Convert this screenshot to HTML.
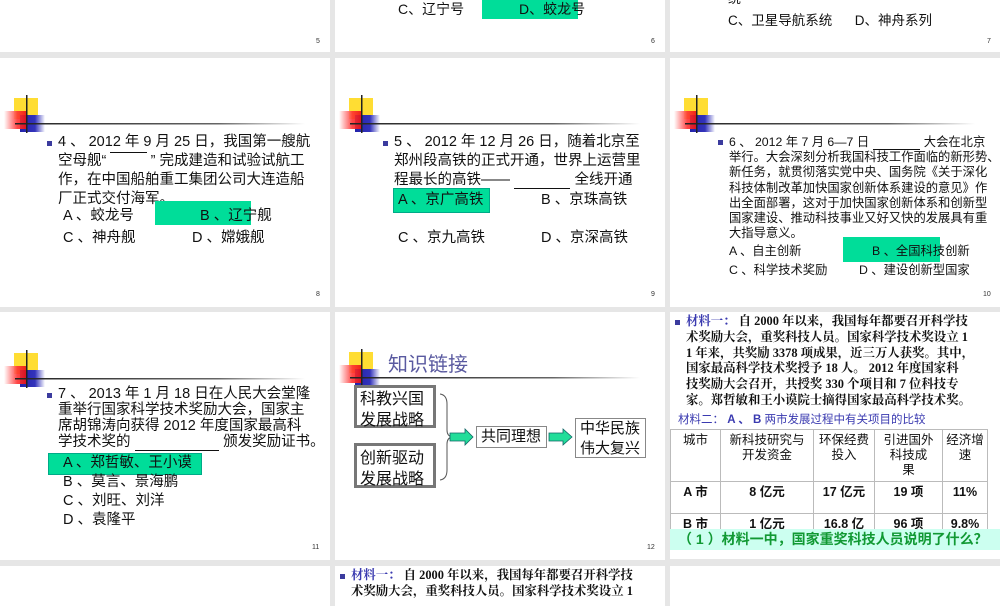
<!DOCTYPE html>
<html><head><meta charset="utf-8"><style>
*{margin:0;padding:0;box-sizing:border-box}
body{width:1000px;height:600px;background:#e6e6e6;position:relative;overflow:hidden;font-family:"Liberation Sans","Noto Sans CJK SC",sans-serif;color:#111}
.s{position:absolute;background:#fff}
.a{position:absolute;white-space:nowrap}
.n{position:absolute;font-size:7px;color:#333}
.g{position:absolute;background:#00dd99}
.t{font-size:14.5px;line-height:19px}
.bul{position:absolute;width:5px;height:5px;background:#3b3b9e}
.serif{font-family:"Liberation Serif","Noto Serif CJK SC",serif;font-weight:bold}
.box{position:absolute;border:3px solid #777;background:#fff;font-size:16px;line-height:21px;padding:1px 3px}
.box2{position:absolute;border:1.5px solid #888;background:#fff;font-size:15px;line-height:20px;padding:0 4px}
table{border-collapse:collapse}
td{border:1px solid #bbb;text-align:center;vertical-align:top;font-size:12.5px;line-height:15px;padding-top:3px}
</style></head><body>

<!-- Row 1 -->
<div class="s" style="left:0;top:0;width:330px;height:52px"></div>
<div class="n" style="left:316px;top:38px">5</div>
<div class="s" style="left:335px;top:0;width:330px;height:52px"></div>
<div class="g" style="left:482px;top:-2px;width:96px;height:21px"></div>
<div class="a" style="left:398px;top:-1px;font-size:14px">C、辽宁号</div>
<div class="a" style="left:519px;top:-1px;font-size:14px">D、蛟龙号</div>
<div class="n" style="left:651px;top:38px">6</div>
<div class="s" style="left:670px;top:0;width:330px;height:52px"></div>
<div class="a" style="left:728px;top:-12px;font-size:13px">统</div>
<div class="a" style="left:728px;top:9px;font-size:13.5px">C、卫星导航系统&nbsp;&nbsp;&nbsp;&nbsp;&nbsp;&nbsp;D、神舟系列</div>
<div class="n" style="left:987px;top:38px">7</div>

<svg width="0" height="0" style="position:absolute">
<defs>
<linearGradient id="r" x1="0" x2="1"><stop offset="0" stop-color="#fff"/><stop offset=".6" stop-color="#f33"/><stop offset="1" stop-color="#e11"/></linearGradient>
<linearGradient id="b" x1="0" x2="1"><stop offset="0" stop-color="#22a"/><stop offset=".6" stop-color="#33b"/><stop offset="1" stop-color="#fff"/></linearGradient>
<linearGradient id="l" x1="0" x2="1"><stop offset="0" stop-color="#222"/><stop offset=".7" stop-color="#666"/><stop offset="1" stop-color="#fff"/></linearGradient>
<g id="dec">
<rect x="14" y="3" width="24" height="21" fill="#fd3"/>
<rect x="20" y="20" width="25" height="17" fill="url(#b)"/>
<rect x="4" y="16" width="22" height="18" fill="url(#r)" opacity=".9"/>
<rect x="15" y="28" width="290" height="1.5" fill="url(#l)"/>
<rect x="26" y="0" width="1.5" height="38" fill="#222"/>
</g></defs></svg>

<!-- Row 2 -->
<div class="s" style="left:0;top:58px;width:330px;height:249px"></div>
<svg class="a" style="left:0;top:95px" width="320" height="40"><use href="#dec"/></svg>
<div class="bul" style="left:47px;top:141px"></div>
<div class="a t" style="left:58px;top:133px">4 、 2012 年 9 月 25 日，我国第一艘航<br>空母舰“ <span style="border-top:1px solid #111">&nbsp;&nbsp;&nbsp;&nbsp;&nbsp;&nbsp;&nbsp;&nbsp;&nbsp;</span> ” 完成建造和试验试航工<br>作，在中国船舶重工集团公司大连造船<br>厂正式交付海军。</div>
<div class="g" style="left:155px;top:201px;width:96px;height:24px"></div>
<div class="a t" style="left:63px;top:207px">A 、蛟龙号</div>
<div class="a t" style="left:200px;top:207px">B 、辽宁舰</div>
<div class="a t" style="left:63px;top:229px">C 、神舟舰</div>
<div class="a t" style="left:192px;top:229px">D 、嫦娥舰</div>
<div class="n" style="left:316px;top:291px">8</div>

<div class="s" style="left:335px;top:58px;width:330px;height:249px"></div>
<svg class="a" style="left:335px;top:95px" width="320" height="40"><use href="#dec"/></svg>
<div class="bul" style="left:383px;top:141px"></div>
<div class="a t" style="left:394px;top:133px">5 、 2012 年 12 月 26 日，随着北京至<br>郑州段高铁的正式开通，世界上运营里<br>程最长的高铁—— <span style="border-bottom:1px solid #111">&nbsp;&nbsp;&nbsp;&nbsp;&nbsp;&nbsp;&nbsp;&nbsp;&nbsp;&nbsp;&nbsp;&nbsp;&nbsp;&nbsp;</span> 全线开通</div>
<div class="g" style="left:393px;top:188px;width:97px;height:25px;border:1px solid #0a8"></div>
<div class="a t" style="left:398px;top:191px">A 、京广高铁</div>
<div class="a t" style="left:541px;top:191px">B 、京珠高铁</div>
<div class="a t" style="left:398px;top:229px">C 、京九高铁</div>
<div class="a t" style="left:541px;top:229px">D 、京深高铁</div>
<div class="n" style="left:651px;top:291px">9</div>

<div class="s" style="left:670px;top:58px;width:330px;height:249px"></div>
<svg class="a" style="left:670px;top:95px" width="320" height="40"><use href="#dec"/></svg>
<div class="bul" style="left:718px;top:140px"></div>
<div class="a" style="left:729px;top:135px;font-size:12.3px;line-height:15.2px">6 、 2012 年 7 月 6—7 日 <span style="border-bottom:1px solid #111">&nbsp;&nbsp;&nbsp;&nbsp;&nbsp;&nbsp;&nbsp;&nbsp;&nbsp;&nbsp;&nbsp;&nbsp;&nbsp;&nbsp;</span> 大会在北京<br>举行。大会深刻分析我国科技工作面临的新形势、<br>新任务，就贯彻落实党中央、国务院《关于深化<br>科技体制改革加快国家创新体系建设的意见》作<br>出全面部署，这对于加快国家创新体系和创新型<br>国家建设、推动科技事业又好又快的发展具有重<br>大指导意义。</div>
<div class="g" style="left:843px;top:237px;width:97px;height:25px"></div>
<div class="a" style="left:729px;top:241px;font-size:12.3px">A 、自主创新</div>
<div class="a" style="left:872px;top:241px;font-size:12.3px">B 、全国科技创新</div>
<div class="a" style="left:729px;top:260px;font-size:12.3px">C 、科学技术奖励</div>
<div class="a" style="left:859px;top:260px;font-size:12.3px">D 、建设创新型国家</div>
<div class="n" style="left:983px;top:291px">10</div>

<!-- Row 3 -->
<div class="s" style="left:0;top:312px;width:330px;height:248px"></div>
<svg class="a" style="left:0;top:350px" width="320" height="40"><use href="#dec"/></svg>
<div class="bul" style="left:47px;top:393px"></div>
<div class="a" style="left:58px;top:386px;font-size:14.5px;line-height:16px">7 、 2013 年 1 月 18 日在人民大会堂隆<br>重举行国家科学技术奖励大会，国家主<br>席胡锦涛向获得 2012 年度国家最高科<br>学技术奖的 <span style="border-bottom:1px solid #111">&nbsp;&nbsp;&nbsp;&nbsp;&nbsp;&nbsp;&nbsp;&nbsp;&nbsp;&nbsp;&nbsp;&nbsp;&nbsp;&nbsp;&nbsp;&nbsp;&nbsp;&nbsp;&nbsp;&nbsp;&nbsp;</span> 颁发奖励证书。</div>
<div class="g" style="left:48px;top:453px;width:154px;height:22px;border:1px solid #0a8"></div>
<div class="a" style="left:63px;top:454px;font-size:14.5px;line-height:19px">A 、郑哲敏、王小谟<br>B 、莫言、景海鹏<br>C 、刘旺、刘洋<br>D 、袁隆平</div>
<div class="n" style="left:312px;top:544px">11</div>

<div class="s" style="left:335px;top:312px;width:330px;height:248px"></div>
<svg class="a" style="left:335px;top:349px" width="320" height="40"><use href="#dec"/></svg>
<div class="a" style="left:388px;top:348px;font-size:20px;color:#5a5aa0">知识链接</div>
<div class="box" style="left:354px;top:385px;width:82px;height:43px">科教兴国<br>发展战略</div>
<div class="box" style="left:354px;top:443px;width:82px;height:45px;padding-top:2px">创新驱动<br>发展战略</div>
<svg class="a" style="left:438px;top:392px" width="40" height="90">
<path d="M2 2 Q9 3 9 12 L9 38 Q9 44 14 45 Q9 46 9 52 L9 78 Q9 87 2 88" fill="none" stroke="#555" stroke-width="1"/>
<path d="M12 41 L27 41 L27 37 L35 45 L27 53 L27 49 L12 49 Z" fill="#2d9" stroke="#166" stroke-width=".8"/>
</svg>
<div class="box2" style="left:476px;top:426px;width:71px;height:22px">共同理想</div>
<svg class="a" style="left:548px;top:427px" width="26" height="20"><path d="M1 6 L15 6 L15 2 L24 10 L15 18 L15 14 L1 14 Z" fill="#2d9" stroke="#166" stroke-width=".8"/></svg>
<div class="box2" style="left:575px;top:418px;width:71px;height:40px">中华民族<br>伟大复兴</div>
<div class="n" style="left:647px;top:544px">12</div>

<div class="s" style="left:670px;top:312px;width:330px;height:247px"></div>
<div class="bul" style="left:675px;top:320px"></div>
<div class="a serif" style="left:686px;top:314px;font-size:12.4px;line-height:15.8px"><span style="color:#3a3ab0">材料一：</span> 自 2000 年以来，我国每年都要召开科学技<br>术奖励大会，重奖科技人员。国家科学技术奖设立 1<br>1 年来，共奖励 3378 项成果，近三万人获奖。其中，<br>国家最高科学技术奖授予 18 人。 2012 年度国家科<br>技奖励大会召开，共授奖 330 个项目和 7 位科技专<br>家。郑哲敏和王小谟院士摘得国家最高科学技术奖。</div>
<div class="a" style="left:678px;top:411px;font-size:11.5px;color:#3a3ab0">材料二： <b>A 、 B</b> 两市发展过程中有关项目的比较</div>
<div class="a" style="left:670px;top:429px;width:326px;height:100px;overflow:hidden">
<table style="width:318px">
<tr style="height:52px"><td style="width:50px">城市</td><td style="width:93px">新科技研究与<br>开发资金</td><td style="width:61px">环保经费<br>投入</td><td style="width:68px">引进国外<br>科技成<br>果</td><td>经济增<br>速</td></tr>
<tr style="height:32px"><td><b>A 市</b></td><td><b>8 亿元</b></td><td><b>17 亿元</b></td><td><b>19 项</b></td><td><b>11%</b></td></tr>
<tr style="height:32px"><td><b>B 市</b></td><td><b>1 亿元</b></td><td><b>16.8 亿</b></td><td><b>96 项</b></td><td><b>9.8%</b></td></tr>
</table></div>
<div class="a" style="left:670px;top:529px;width:330px;height:21px;background:#ccfff0;color:#119933;font-size:14px;font-weight:bold;line-height:21px;padding-left:8px">（ 1 ）材料一中，国家重奖科技人员说明了什么？</div>

<!-- Row 4 -->
<div class="s" style="left:0;top:566px;width:330px;height:40px"></div>
<div class="s" style="left:335px;top:566px;width:330px;height:40px"></div>
<div class="bul" style="left:340px;top:574px"></div>
<div class="a serif" style="left:351px;top:568px;font-size:12.4px;line-height:15.8px"><span style="color:#3a3ab0">材料一：</span> 自 2000 年以来，我国每年都要召开科学技<br>术奖励大会，重奖科技人员。国家科学技术奖设立 1</div>
<div class="s" style="left:670px;top:566px;width:330px;height:40px"></div>
</body></html>
